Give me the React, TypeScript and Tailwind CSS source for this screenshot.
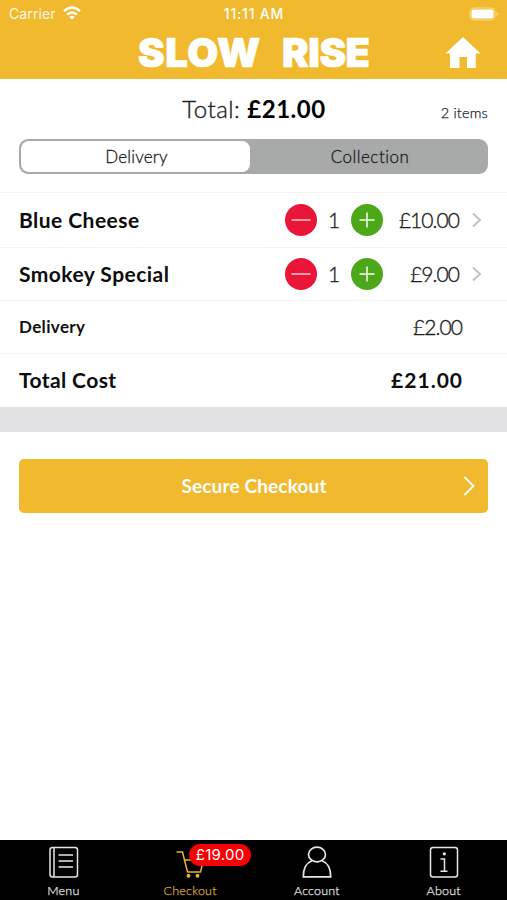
import React from "react";

function Minus() {
  return (
    <button className="flex size-8 items-center justify-center rounded-full bg-[#ea1537]">
      <svg width="32" height="32" viewBox="0 0 32 32" stroke="#fff" strokeOpacity=".9" strokeWidth="1.3">
        <path d="M6.5 16h19" />
      </svg>
    </button>
  );
}

function Plus() {
  return (
    <button className="flex size-8 items-center justify-center rounded-full bg-[#4da819]">
      <svg width="32" height="32" viewBox="0 0 32 32" stroke="#fff" strokeOpacity=".95" strokeWidth="1.5">
        <path d="M8.5 16h15M16 8.5v15" />
      </svg>
    </button>
  );
}

function ItemRow({ name, price, height }: { name: string; price: string; height: string }) {
  return (
    <div className={`flex items-center border-t border-[#f3f3f3] pl-[19px] pr-[24px] ${height}`}>
      <span className="flex-1 text-[21px] font-bold tracking-[0.45px] text-[#0c0c0c]">{name}</span>
      <Minus />
      <span className="w-[34px] text-center text-[21px] font-light text-[#1c1c1c] [-webkit-text-stroke:0.35px]">1</span>
      <Plus />
      <span className="w-[76px] text-right text-[21px] font-light tracking-[-0.95px] text-[#1c1c1c] [-webkit-text-stroke:0.35px]">{price}</span>
      <svg className="ml-[12px]" width="12" height="16" viewBox="0 0 12 16" fill="none" stroke="#c2c2c2" strokeWidth="2">
        <path d="M2 1.5L9 8l-7 6.500" />
      </svg>
    </div>
  );
}

function Tab({ label, color, children }: { label: string; color: string; children: React.ReactNode }) {
  return (
    <div className={`flex flex-1 flex-col items-center pt-[6px] ${color}`}>
      <div className="h-8 w-8">{children}</div>
      <span className="mt-[4px] text-[12.500px] leading-[18px] font-light tracking-[0.2px] [-webkit-text-stroke:0.25px]">{label}</span>
    </div>
  );
}

export default function App() {
  return (
    <div className="flex h-[900px] w-[507px] flex-col overflow-hidden bg-white font-['Lato',sans-serif] text-[#2b2b2b]">
      <header className="h-[79px] bg-[#f1ba2e] text-white">
        <div className="grid h-[27px] grid-cols-3 items-center pr-[8px] pl-[9px] font-['Inter',sans-serif] text-[14px]">
          <div className="flex items-center gap-[7px] text-[#fff8e6]">
            <span className="tracking-[0.1px]">Carrier</span>
            <svg className="mb-px" width="18" height="14" viewBox="0 0 18 14" fill="none" stroke="#fff" strokeWidth="2.4">
              <path d="M1 5.200Q9 -2 17 5.200M4 8.600Q9 4.200 14 8.600" />
              <path d="M6.200 10.800Q9 8.800 11.800 10.800L9 13.700Z" fill="#fff" stroke="none" />
            </svg>
          </div>
          <span className="text-center text-[14px] font-medium tracking-[0.8px]">11:11 AM</span>
          <svg className="ml-auto" width="31" height="14" viewBox="0 0 31 14">
            <rect x="2" y="1" width="25" height="12" rx="4" fill="none" stroke="#f8dc95" />
            <rect x="3.500" y="2.500" width="22" height="9" rx="2" fill="#fff" />
            <path d="M28.500 5v4q1.500-.8 1.500-2t-1.500-2" fill="#f8dc95" />
          </svg>
        </div>
        <div className="flex h-[51px] items-center pl-[138px] pr-[26px]">
          <h1 className="flex gap-[21px] font-['Inter',sans-serif] text-[40px] leading-[50px] font-black [-webkit-text-stroke:0.7px_white]">
            <span className="tracking-[0.600px]">SLOW</span>
            <span className="tracking-[-0.500px]">RISE</span>
          </h1>
          <svg className="ml-auto" width="36" height="32" viewBox="0 0 36 32" fill="#fff">
            <path d="M18 0L35.500 16.500h-4.700v14.500H22V20h-7.500v11H5V16.500H.5Z" />
          </svg>
        </div>
      </header>

      <section className="h-[113px] px-[19px]">
        <div className="grid h-[60px] grid-cols-[1fr_auto_1fr] items-center">
          <span />
          <p className="pl-px text-[24px] font-light tracking-[0.500px] text-[#1c1c1c] [-webkit-text-stroke:0.35px]">
            Total: <b className="font-bold text-black [-webkit-text-stroke:0px]">£21.00</b>
          </p>
          <span className="pt-[7px] text-right text-[14.500px] font-light tracking-[0.2px] text-[#1c1c1c] [-webkit-text-stroke:0.25px]">2 items</span>
        </div>
        <div className="flex h-[35px] rounded-[9px] bg-[#a8a9a9] p-[2px] text-[17px] font-light text-[#1c1c1c] [-webkit-text-stroke:0.3px]">
          <div className="flex w-[229px] items-center justify-center rounded-[8px] bg-white pl-[2px] tracking-[0.2px]">Delivery</div>
          <div className="flex flex-1 items-center justify-center pl-[4px] tracking-[0.5px]">Collection</div>
        </div>
      </section>

      <ItemRow name="Blue Cheese" price="£10.00" height="h-[55px]" />
      <ItemRow name="Smokey Special" price="£9.00" height="h-[53px]" />
      <div className="flex h-[53px] items-center justify-between border-t border-[#f3f3f3] pl-[19px] pr-[45px]">
        <span className="text-[17px] font-bold tracking-[0.35px] text-[#111]">Delivery</span>
        <span className="text-[21px] font-light tracking-[-0.9px] text-[#1c1c1c] [-webkit-text-stroke:0.35px]">£2.00</span>
      </div>
      <div className="flex h-[54px] items-center justify-between border-t border-[#f3f3f3] pb-px pl-[19px] pr-[45px] text-[21px] font-bold text-[#0c0c0c]">
        <span className="tracking-[0.4px]">Total Cost</span>
        <span className="-mr-px tracking-[1px]">£21.00</span>
      </div>
      <div className="h-[25px] bg-[#e2e2e4]" />

      <main className="flex-1 px-[19px] pt-[27px]">
        <button className="grid h-[54px] w-full grid-cols-[1fr_auto_1fr] items-center rounded-[5px] bg-[#f1ba2e] pr-[13px] pl-[14px] text-white">
          <span />
          <span className="text-[19px] font-bold tracking-[0.15px]">Secure Checkout</span>
          <svg className="ml-auto" width="12" height="20" viewBox="0 0 12 20" fill="none" stroke="#fff" strokeWidth="1.8">
            <path d="M1.500 1L10.500 10l-9 9" />
          </svg>
        </button>
      </main>

      <nav className="flex h-[60px] bg-black">
        <Tab label="Menu" color="text-[#e6e6e6]">
          <svg className="translate-x-px" width="32" height="32" viewBox="0 0 32 32" fill="none" stroke="currentColor" strokeWidth="1.500">
            <rect x="2" y="1.500" width="27.500" height="29.500" rx="2.500" />
            <path d="M6 1.500v29.500M10.500 9h14.500M10.500 15h14.500M10.500 21h14.500" />
          </svg>
        </Tab>
        <Tab label="Checkout" color="text-[#dba92f]">
          <div className="relative">
            <svg width="32" height="32" viewBox="0 0 32 32" fill="none" stroke="#e9b32e" strokeWidth="1.500">
              <path d="M2.500 6h6l5 20h13l3-12H10.500" />
              <circle cx="14.500" cy="29.800" r="1.200" fill="#e9b32e" />
              <circle cx="23.500" cy="29.800" r="1.200" fill="#e9b32e" />
            </svg>
            <span className="absolute top-[-2px] left-[15px] flex h-[22px] w-[62px] items-center justify-center rounded-full bg-[#f90006] font-['Inter',sans-serif] text-[15px] tracking-[0.3px] text-white">
              £19.00
            </span>
          </div>
        </Tab>
        <Tab label="Account" color="text-[#e6e6e6]">
          <svg width="32" height="32" viewBox="0 0 32 32" fill="none" stroke="currentColor" strokeWidth="1.700">
            <ellipse cx="16" cy="8.500" rx="8.500" ry="7.300" />
            <path d="M11 14.800C5 17 2.300 22 2.300 30.800h27.400C29.700 22 27 17 21 14.800" />
          </svg>
        </Tab>
        <Tab label="About" color="text-[#e6e6e6]">
          <svg width="32" height="32" viewBox="0 0 32 32" fill="none" stroke="currentColor" strokeWidth="1.500">
            <rect x="2.500" y="1.500" width="27" height="29.500" rx="2.500" />
            <path d="M12.500 13h4v12.200M12.500 25.300h7" />
            <circle cx="16.300" cy="7.800" r=".9" fill="currentColor" />
          </svg>
        </Tab>
      </nav>
    </div>
  );
}
